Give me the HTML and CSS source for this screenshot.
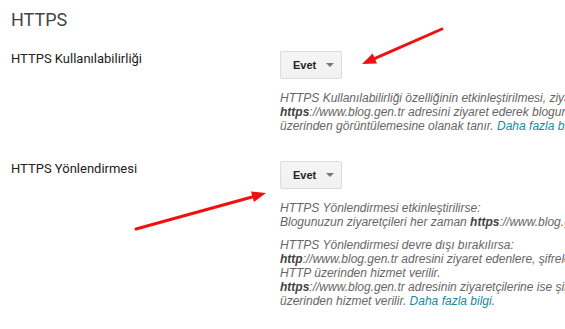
FILE: index.html
```html
<!DOCTYPE html>
<html lang="tr">
<head>
    <meta charset="UTF-8">
    <meta name="viewport" content="width=device-width, initial-scale=1.0">
    <title>HTTPS</title>
    <link rel="stylesheet" href="styles.css">
</head>
<body>

    <div class="page">
        <h2 class="section-title">HTTPS</h2>

        <!-- HTTPS availability -->
        <div class="setting-row">
            <div class="setting-label">HTTPS Kullanılabilirliği</div>
            <div class="setting-control">
                <button class="dropdown-btn">Evet <span class="caret"></span></button>
                <div class="setting-help">
                    <p>HTTPS Kullanılabilirliği özelliğinin etkinleştirilmesi, ziyaretçilerin<br>
                    <b>https</b>://www.blog.gen.tr adresini ziyaret ederek blogunuzu şifreli bir bağlantı<br>
                    üzerinden görüntülemesine olanak tanır. <a href="#">Daha fazla bilgi</a>.</p>
                </div>
            </div>
        </div>

        <!-- HTTPS redirect -->
        <div class="setting-row">
            <div class="setting-label">HTTPS Yönlendirmesi</div>
            <div class="setting-control">
                <button class="dropdown-btn">Evet <span class="caret"></span></button>
                <div class="setting-help">
                    <p>HTTPS Yönlendirmesi etkinleştirilirse:<br>
                    Blogunuzun ziyaretçileri her zaman <b>https</b>://www.blog.gen.tr adresine yönlendirilir.</p>
                    <p>HTTPS Yönlendirmesi devre dışı bırakılırsa:<br>
                    <b>http</b>://www.blog.gen.tr adresini ziyaret edenlere, şifrelenmemiş bir bağlantı olan<br>
                    HTTP üzerinden hizmet verilir.<br>
                    <b>https</b>://www.blog.gen.tr adresinin ziyaretçilerine ise şifreli bir bağlantı olan HTTPS<br>
                    üzerinden hizmet verilir. <a href="#">Daha fazla bilgi</a>.</p>
                </div>
            </div>
        </div>
    </div>

    <!-- annotation arrows drawn over the page -->
    <svg class="arrows" width="565" height="329" viewBox="0 0 565 329">
        <line x1="442" y1="29" x2="375" y2="58.4" stroke="#f01010" stroke-width="3" stroke-linecap="round"/>
        <polygon points="362,64 377,63.4 372.6,53.4" fill="#f01010"/>
        <line x1="136" y1="229" x2="253" y2="196.7" stroke="#f01010" stroke-width="3" stroke-linecap="round"/>
        <polygon points="266,193 254,202 251,191.4" fill="#f01010"/>
    </svg>

</body>
</html>
```

FILE: styles.css
```css
body {
    margin: 0;
    padding: 0;
    background: #fff;
    width: 565px;
    height: 329px;
    overflow: hidden;
    position: relative;
}
.page {
    padding: 8px 0 0 11px;
}
.section-title {
    font-family: Roboto, "Liberation Sans", sans-serif;
    font-size: 18px;
    font-weight: 400;
    line-height: 24px;
    color: #444;
    margin: 0 0 17px 0;
}
.setting-row {
    display: grid;
    grid-template-columns: 269px 1fr;
    margin-bottom: 26px;
}
.setting-label {
    font-family: Roboto, "Liberation Sans", sans-serif;
    font-size: 13px;
    line-height: 20px;
    color: #222;
}
.setting-control {
    padding-top: 2px;
}
.dropdown-btn {
    display: flex;
    align-items: center;
    box-sizing: border-box;
    width: 62px;
    height: 28px;
    padding: 0 0 0 12px;
    margin: 0;
    font-family: "Liberation Sans", Arial, sans-serif;
    font-size: 11px;
    font-weight: bold;
    color: #222;
    background: linear-gradient(#f5f5f5, #f1f1f1);
    border: 1px solid #dcdcdc;
    border-radius: 2px;
}
.caret {
    display: inline-block;
    margin-left: 10px;
    width: 0;
    height: 0;
    border-left: 4px solid transparent;
    border-right: 4px solid transparent;
    border-top: 4px solid #777;
}
.setting-help {
    margin-top: 12px;
    white-space: nowrap;
    font-family: "Liberation Sans", Arial, sans-serif;
    font-size: 12px;
    font-style: italic;
    line-height: 14px;
    color: #666;
}
.setting-help p {
    margin: 0 0 9px 0;
}
.setting-help p:last-child {
    margin-bottom: 0;
}
.setting-help b {
    color: #444;
}
.setting-help a {
    color: #168a9b;
    text-decoration: none;
}
.arrows {
    position: absolute;
    left: 0;
    top: 0;
}
```
